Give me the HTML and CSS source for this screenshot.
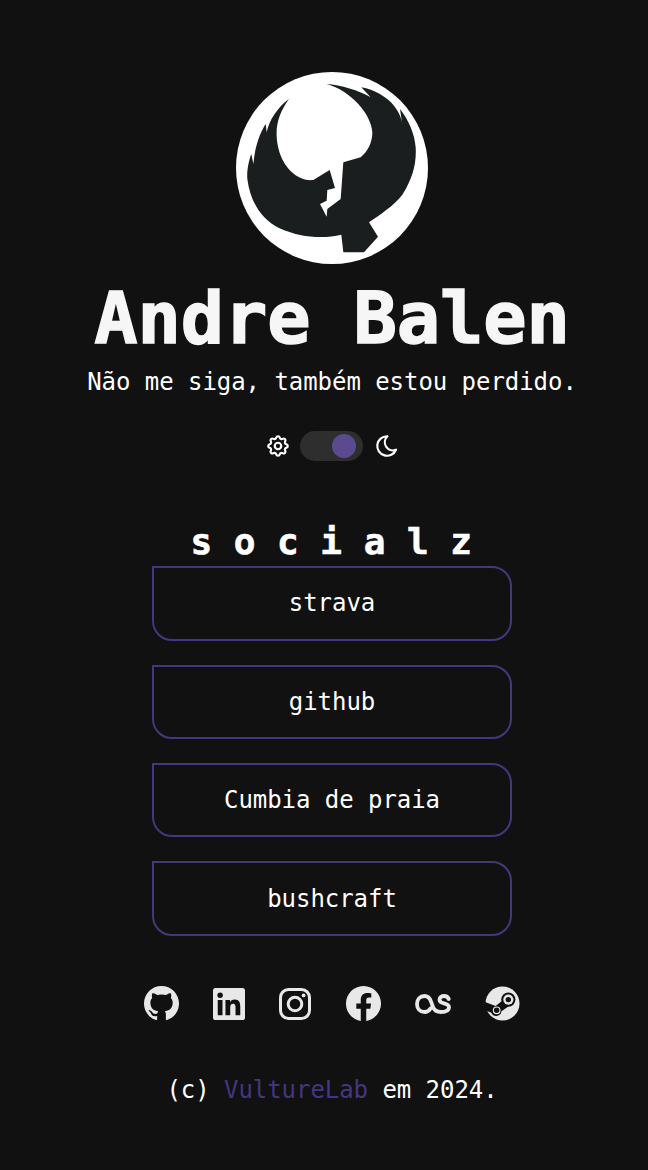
FILE: index.html
```html
<!DOCTYPE html>
<html lang="en">
<head>
    <meta charset="UTF-8">
    <meta name="viewport" content="width=device-width, initial-scale=1.0">
    <title>Andre Balen</title>
    <link rel="stylesheet" href="styles.css">
</head>
<body>
    <main class="page">
        <div class="avatar">
            <svg viewBox="36 24 576 576" width="192" height="192">
                <path fill="#1b1e1e" d="M308 60 C350 62 405 80 440 100 L412 70 C450 76 490 100 510 125 C525 145 532 160 535 182 L528 135 C555 170 572 210 575 250 C578 300 565 345 535 392 C510 425 470 450 435 475 L462 518 L420 565 L358 565 L352 512 C300 525 230 522 165 492 C110 465 78 410 70 345 C68 320 74 290 82 270 L88 300 C92 255 105 210 125 180 L128 205 C135 170 160 130 195 105 C170 140 156 175 158 215 C160 270 185 320 230 342 C245 349 258 349 268 348 L317 318 L333 372 L310 378 L308 410 L288 420 L308 458 L310 435 L350 405 L358 295 L410 280 C432 262 445 235 445 205 C442 150 380 80 308 60 Z"/>
            </svg>
        </div>
        <h1 class="name">Andre Balen</h1>
        <p class="tagline">Não me siga, também estou perdido.</p>

        <div class="theme-switch">
            <svg class="theme-icon" viewBox="0 0 24 24" width="26" height="26">
                <path d="M10.325 4.317c.426 -1.756 2.924 -1.756 3.35 0a1.724 1.724 0 0 0 2.573 1.066c1.543 -.94 3.31 .826 2.37 2.37a1.724 1.724 0 0 0 1.065 2.572c1.756 .426 1.756 2.924 0 3.35a1.724 1.724 0 0 0 -1.066 2.573c.94 1.543 -.826 3.31 -2.37 2.37a1.724 1.724 0 0 0 -2.572 1.065c-.426 1.756 -2.924 1.756 -3.35 0a1.724 1.724 0 0 0 -2.573 -1.066c-1.543 .94 -3.31 -.826 -2.37 -2.37a1.724 1.724 0 0 0 -1.065 -2.572c-1.756 -.426 -1.756 -2.924 0 -3.35a1.724 1.724 0 0 0 1.066 -2.573c-.94 -1.543 .826 -3.31 2.37 -2.37c1 .608 2.296 .07 2.572 -1.065z"/>
                <circle cx="12" cy="12" r="3"/>
            </svg>
            <div class="track"><span class="knob"></span></div>
            <svg class="theme-icon" viewBox="0 0 24 24" width="26" height="26">
                <path d="M12 3c.132 0 .263 0 .393 0a7.5 7.5 0 0 0 7.92 12.446a9 9 0 1 1 -8.313 -12.454z"/>
            </svg>
        </div>

        <h2 class="section-title">socialz</h2>
        <nav class="links">
            <a class="link-btn" href="#">strava</a>
            <a class="link-btn" href="#">github</a>
            <a class="link-btn" href="#">Cumbia de praia</a>
            <a class="link-btn" href="#">bushcraft</a>
        </nav>

        <div class="socials">
            <!-- github -->
            <svg class="social" viewBox="0 0 16 16" width="35" height="35">
                <path d="M8 0C3.58 0 0 3.58 0 8c0 3.54 2.29 6.53 5.47 7.59.4.07.55-.17.55-.38 0-.19-.01-.82-.01-1.49-2.01.37-2.53-.49-2.69-.94-.09-.23-.48-.94-.82-1.13-.28-.15-.68-.52-.01-.53.63-.01 1.08.58 1.23.82.72 1.21 1.87.87 2.33.66.07-.52.28-.87.51-1.07-1.78-.2-3.64-.89-3.64-3.95 0-.87.31-1.59.82-2.15-.08-.2-.36-1.02.08-2.12 0 0 .67-.21 2.2.82.64-.18 1.32-.27 2-.27s1.36.09 2 .27c1.53-1.04 2.2-.82 2.2-.82.44 1.1.16 1.92.08 2.12.51.56.82 1.27.82 2.15 0 3.07-1.87 3.75-3.65 3.95.29.25.54.73.54 1.48 0 1.07-.01 1.93-.01 2.2 0 .21.15.46.55.38A8.01 8.01 0 0 0 16 8c0-4.42-3.58-8-8-8z"/>
            </svg>
            <!-- linkedin -->
            <svg class="social" viewBox="0 0 24 24" width="32" height="32">
                <path d="M20.45 20.45h-3.55v-5.57c0-1.33-.03-3.04-1.85-3.04-1.85 0-2.14 1.45-2.14 2.94v5.67H9.35V9h3.41v1.56h.05c.48-.9 1.64-1.85 3.37-1.85 3.6 0 4.27 2.37 4.27 5.45v6.29zM5.34 7.43a2.06 2.06 0 1 1 0-4.12 2.06 2.06 0 0 1 0 4.12zM7.12 20.45H3.56V9h3.56v11.45zM22.22 0H1.77C.79 0 0 .77 0 1.73v20.54C0 23.23.79 24 1.77 24h20.45c.98 0 1.78-.77 1.78-1.73V1.73C24 .77 23.2 0 22.22 0z"/>
            </svg>
            <!-- instagram -->
            <svg class="social social-line" viewBox="0 0 32 32" width="32" height="32">
                <rect x="1.5" y="1.5" width="29" height="29" rx="8"/>
                <circle cx="16" cy="16" r="6.8"/>
                <circle class="dot" cx="24.6" cy="7.4" r="1.9"/>
            </svg>
            <!-- facebook -->
            <svg class="social" viewBox="0 0 16 16" width="35" height="35">
                <path d="M16 8.049c0-4.446-3.582-8.05-8-8.05C3.58 0-.002 3.603-.002 8.05c0 4.017 2.926 7.347 6.75 7.951v-5.625h-2.03V8.05H6.75V6.275c0-2.017 1.195-3.131 3.022-3.131.876 0 1.791.157 1.791.157v1.98h-1.009c-.993 0-1.303.621-1.303 1.258v1.51h2.218l-.354 2.326H9.25V16c3.824-.604 6.75-3.934 6.75-7.951z"/>
            </svg>
            <!-- lastfm -->
            <svg class="social social-line lastfm" viewBox="0 0 36 20" width="36" height="20">
                <path d="M15.5 14.500C14 17 12 18 9.500 18C5 18 2 14.500 2 10C2 5.500 5 2 9.500 2C13 2 14.800 4 16 7.500L18 13C19.300 16.500 21.500 18 26 18C30.500 18 34 16.500 34 13.300C34 10.800 32 10 29 9.300C26 8.600 24.500 8 24.500 5.700C24.500 3.400 26.500 2 29 2C31.200 2 33 3 33.700 5"/>
            </svg>
            <!-- steam -->
            <svg class="social" viewBox="0 0 36 36" width="35" height="35">
                <circle cx="18" cy="18" r="17.500"/>
                <path class="cut" d="M-1 16L11 20.500L18 15L24 21L17 26A5.500 5.500 0 0 1 6.500 27.500L-1 24.500Z"/>
                <circle class="cut" cx="24" cy="14" r="7.300"/>
                <circle cx="24" cy="14" r="5.200"/>
                <circle class="cut" cx="24" cy="14" r="2.800"/>
                <circle class="ring" cx="12" cy="25" r="3.400"/>
            </svg>
        </div>

        <footer class="credit">(c) <a href="#">VultureLab</a> em 2024.</footer>
    </main>
</body>
</html>
```

FILE: styles.css
```css
html, body { margin: 0; background-color: #111111; }
body {
    font-family: "DejaVu Sans Mono", "Liberation Mono", monospace;
    color: #ffffff;
    overflow-x: hidden;
}
.page {
    display: flex;
    flex-direction: column;
    align-items: center;
    box-sizing: border-box;
    height: 1170px;
    padding: 72px 0 0 16px;
}
.avatar {
    width: 192px;
    height: 192px;
    border-radius: 50%;
    background-color: #ffffff;
    overflow: hidden;
    flex-shrink: 0;
}
.avatar svg { display: block; }
.name {
    margin: 14px 0 0;
    font-size: 72px;
    line-height: 80px;
    font-weight: 700;
    letter-spacing: -0.14px;
    color: #f6f6f6;
    -webkit-text-stroke: 1.5px #f6f6f6;
    white-space: nowrap;
}
.tagline {
    margin: 6px 0 0;
    font-size: 24px;
    line-height: 36px;
    letter-spacing: -0.05px;
    white-space: nowrap;
}
/* Theme toggle */
.theme-switch {
    display: flex;
    align-items: center;
    gap: 10px;
    margin-top: 29px;
    height: 34px;
    padding-left: 1px;
}
.theme-icon {
    fill: none;
    stroke: #ffffff;
    stroke-width: 2;
    stroke-linecap: round;
    stroke-linejoin: round;
}
.track {
    display: flex;
    align-items: center;
    justify-content: flex-end;
    box-sizing: border-box;
    width: 63px;
    height: 30px;
    margin: 0 1px 0 -1px;
    padding-right: 7px;
    border-radius: 15px;
    background-color: #2e2e2e;
}
.knob {
    width: 24px;
    height: 24px;
    border-radius: 50%;
    background-color: #5b4a8f;
}
/* Link buttons */
.section-title {
    margin: 57px 0 0 20px;
    font-size: 36px;
    line-height: 44px;
    font-weight: 700;
    letter-spacing: 21.6px;
    -webkit-text-stroke: 0.6px #ffffff;
}
.links {
    display: flex;
    flex-direction: column;
    gap: 24px;
    margin-top: 2.3px;
}
.link-btn {
    display: flex;
    align-items: center;
    justify-content: center;
    box-sizing: border-box;
    width: 360px;
    height: 74.4px;
    border: 2px solid #45367f;
    border-radius: 0 20px 20px 20px;
    color: #ffffff;
    font-size: 24px;
    letter-spacing: -0.05px;
    text-decoration: none;
}
/* Social icons */
.socials {
    display: flex;
    align-items: center;
    justify-content: space-between;
    box-sizing: border-box;
    width: 376px;
    height: 36px;
    margin-top: 50px;
}
.social { fill: #e8e8e8; }
.social .cut { fill: #111111; }
.social .ring { fill: none; stroke: #e8e8e8; stroke-width: 1.2; }
.social-line {
    fill: none;
    stroke: #e8e8e8;
    stroke-width: 3;
}
.social-line .dot { fill: #e8e8e8; stroke: none; }
.lastfm { stroke-linecap: round; stroke-width: 3.8; }
.credit {
    margin-top: 50px;
    font-size: 24px;
    line-height: 36px;
    letter-spacing: -0.05px;
    white-space: nowrap;
}
.credit a { color: #45367f; text-decoration: none; }
```
